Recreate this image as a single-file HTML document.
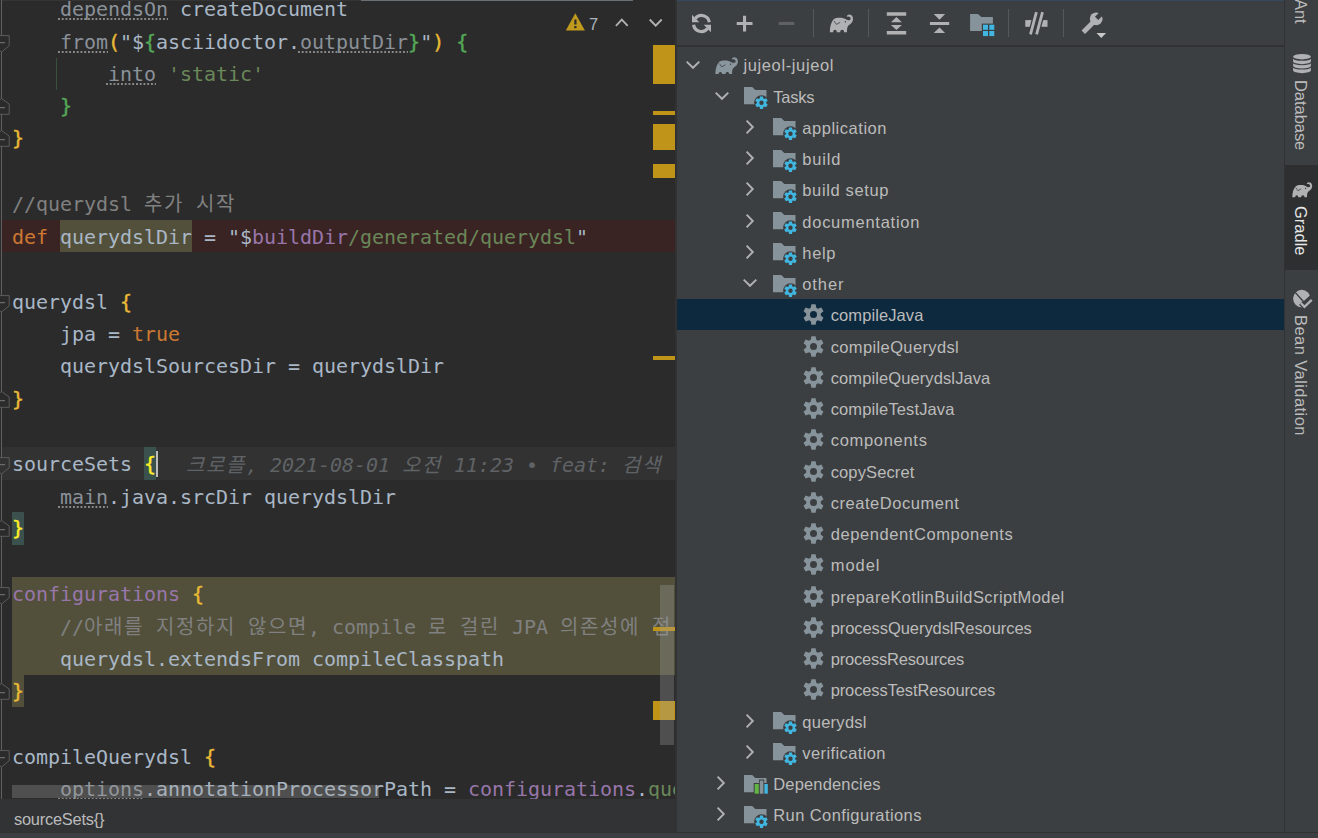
<!DOCTYPE html><html lang="ko"><head><meta charset="utf-8"><title>build.gradle</title><style>
html,body{margin:0;padding:0}
body{width:1318px;height:838px;overflow:hidden;position:relative;background:#3c3f41;font-family:"Liberation Sans",sans-serif}
.ab{position:absolute}
.ab svg{display:block}
#ed{position:absolute;left:0;top:0;width:675px;height:799px;overflow:hidden;background:#2b2b2b}
.ln{position:absolute;left:12px;height:32px;line-height:32px;white-space:pre;font-family:"DejaVu Sans Mono","Liberation Mono","Noto Sans CJK KR",monospace;font-size:20px;letter-spacing:-0.041px;color:#a9b7c6}
.ln .u{padding-left:2px;margin-left:-2px;background-image:linear-gradient(90deg,#8a8a8a 0,#8a8a8a 1.8px,transparent 1.8px);background-size:3.75px 2px;background-repeat:repeat-x;background-position:0 21px}
.ln .k{font-family:"Liberation Sans","Noto Sans CJK KR","NanumGothic",sans-serif;letter-spacing:1.594px}
.ln .b{-webkit-text-stroke:0.45px currentColor}
.tl{position:absolute;height:31.25px;line-height:31.25px;font-size:16.5px;color:#bbbbbb;white-space:pre}
.vt{position:absolute;white-space:pre;font-size:16.5px;color:#bbbbbb;transform-origin:0 0;transform:rotate(90deg);line-height:20px;height:20px}
</style></head><body>
<div id="ed">
<div class="ab" style="left:2px;top:220px;width:673px;height:32px;background:#3a2323"></div>
<div class="ab" style="left:60px;top:220px;width:132px;height:32px;background:#52503a"></div>
<div class="ab" style="left:2px;top:447px;width:673px;height:33px;background:#323232"></div>
<div class="ab" style="left:144px;top:447px;width:12px;height:33px;background:#3b514d"></div>
<div class="ab" style="left:12px;top:512px;width:12px;height:33px;background:#3b514d"></div>
<div class="ab" style="left:12px;top:577px;width:663px;height:98px;background:#52503a"></div>
<div class="ab" style="left:12px;top:675px;width:12px;height:32px;background:#52503a"></div>
<div class="ab" style="left:56px;top:58px;width:1px;height:32px;background:#39503a"></div>
<div class="ab" style="left:361px;top:0;width:272px;height:1px;background:#6a6f73"></div>
<div class="ab" style="left:2px;top:0;width:359px;height:1px;background:#353535"></div>
<div class="ln" style="top:-7.00px"><span style="color:#a9b7c6">    </span><span style="color:#8a9199" class="u">dependsOn</span><span style="color:#a9b7c6"> createDocument</span></div>
<div class="ln" style="top:26.00px"><span style="color:#a9b7c6">    </span><span style="color:#8a9199" class="u">from</span><span style="color:#e8ba36" class="b">(</span><span style="color:#a9b7c6">"$</span><span style="color:#54a857" class="b">{</span><span style="color:#a9b7c6">asciidoctor.</span><span style="color:#8a9199" class="u">outputDir</span><span style="color:#54a857" class="b">}</span><span style="color:#a9b7c6">"</span><span style="color:#e8ba36" class="b">)</span><span style="color:#a9b7c6"> </span><span style="color:#54a857" class="b">{</span></div>
<div class="ln" style="top:58.00px"><span style="color:#a9b7c6">        </span><span style="color:#8a9199" class="u">into</span><span style="color:#a9b7c6"> </span><span style="color:#6a8759">'static'</span></div>
<div class="ln" style="top:90.00px"><span style="color:#a9b7c6">    </span><span style="color:#54a857" class="b">}</span></div>
<div class="ln" style="top:122.00px"><span style="color:#e8ba36" class="b">}</span></div>
<div class="ln" style="top:188.00px"><span style="color:#808080">//querydsl </span><span style="color:#808080" class="k">추가</span><span style="color:#808080"> </span><span style="color:#808080" class="k">시작</span></div>
<div class="ln" style="top:221.00px"><span style="color:#cc7832">def</span><span style="color:#a9b7c6"> querydslDir = "$</span><span style="color:#9876aa">buildDir</span><span style="color:#6a8759">/generated/querydsl</span><span style="color:#a9b7c6">"</span></div>
<div class="ln" style="top:286.00px"><span style="color:#a9b7c6">querydsl </span><span style="color:#e8ba36" class="b">{</span></div>
<div class="ln" style="top:318.00px"><span style="color:#a9b7c6">    jpa = </span><span style="color:#cc7832">true</span></div>
<div class="ln" style="top:350.00px"><span style="color:#a9b7c6">    querydslSourcesDir = querydslDir</span></div>
<div class="ln" style="top:383.00px"><span style="color:#e8ba36" class="b">}</span></div>
<div class="ln" style="top:448.00px"><span style="color:#a9b7c6">sourceSets </span><span style="color:#ffef28" class="b">{</span></div>
<div class="ln" style="top:481.00px"><span style="color:#a9b7c6">    </span><span style="color:#8a9199" class="u">main</span><span style="color:#a9b7c6">.java.srcDir querydslDir</span></div>
<div class="ln" style="top:512.00px"><span style="color:#ffef28" class="b">}</span></div>
<div class="ln" style="top:578.00px"><span style="color:#9876aa">configurations</span><span style="color:#a9b7c6"> </span><span style="color:#e8ba36" class="b">{</span></div>
<div class="ln" style="top:611.00px"><span style="color:#808080">    //</span><span style="color:#808080" class="k">아래를</span><span style="color:#808080"> </span><span style="color:#808080" class="k">지정하지</span><span style="color:#808080"> </span><span style="color:#808080" class="k">않으면</span><span style="color:#808080">, compile </span><span style="color:#808080" class="k">로</span><span style="color:#808080"> </span><span style="color:#808080" class="k">걸린</span><span style="color:#808080"> JPA </span><span style="color:#808080" class="k">의존성에</span><span style="color:#808080"> </span><span style="color:#808080" class="k">접</span></div>
<div class="ln" style="top:643.00px"><span style="color:#a9b7c6">    querydsl.extendsFrom compileClasspath</span></div>
<div class="ln" style="top:675.00px"><span style="color:#e8ba36" class="b">}</span></div>
<div class="ln" style="top:741.00px"><span style="color:#a9b7c6">compileQuerydsl </span><span style="color:#e8ba36" class="b">{</span></div>
<div class="ln" style="top:773.00px"><span style="color:#a9b7c6">    </span><span style="color:#8a9199" class="u">options</span><span style="color:#a9b7c6">.annotationProcessorPath = </span><span style="color:#9876aa">configurations</span><span style="color:#a9b7c6">.</span><span style="color:#6a8759">querydsl</span></div>
<div class="ln" style="left:186px;top:449.00px;color:#606366;font-style:italic"><span class="k">크로플</span>, 2021-08-01 <span class="k">오전</span> 11:23 • feat: <span class="k">검색</span></div>
<div class="ab" style="left:155.5px;top:451px;width:2.5px;height:26px;background:#bbbbbb"></div>
<svg class="ab" style="left:0;top:0" width="14" height="800" viewBox="0 0 14 800"><rect x="1" y="0" width="1" height="800" fill="#606060"/><path d="M-6,35.6H9.2V45.7L1.5,52.1L-6,45.7Z" fill="#2b2b2b" stroke="#5c5c5c" stroke-width="1"/><rect x="-2" y="42.2" width="7" height="1" fill="#7a7a7a"/><path d="M-6,295.6H9.2V305.7L1.5,312.1L-6,305.7Z" fill="#2b2b2b" stroke="#5c5c5c" stroke-width="1"/><rect x="-2" y="302.2" width="7" height="1" fill="#7a7a7a"/><path d="M-6,457.6H9.2V467.7L1.5,474.1L-6,467.7Z" fill="#323232" stroke="#5c5c5c" stroke-width="1"/><rect x="-2" y="464.2" width="7" height="1" fill="#7a7a7a"/><path d="M-6,587.6H9.2V597.7L1.5,604.1L-6,597.7Z" fill="#2b2b2b" stroke="#5c5c5c" stroke-width="1"/><rect x="-2" y="594.2" width="7" height="1" fill="#7a7a7a"/><path d="M-6,750.6H9.2V760.7L1.5,767.1L-6,760.7Z" fill="#2b2b2b" stroke="#5c5c5c" stroke-width="1"/><rect x="-2" y="757.2" width="7" height="1" fill="#7a7a7a"/><path d="M-6,114.3H9.2V104.0L1.5,98.5L-6,104.0Z" fill="#2b2b2b" stroke="#5c5c5c" stroke-width="1"/><rect x="-2" y="107.2" width="7" height="1" fill="#7a7a7a"/><path d="M-6,146.3H9.2V136.0L1.5,130.5L-6,136.0Z" fill="#2b2b2b" stroke="#5c5c5c" stroke-width="1"/><rect x="-2" y="139.2" width="7" height="1" fill="#7a7a7a"/><path d="M-6,407.3H9.2V397.0L1.5,391.5L-6,397.0Z" fill="#2b2b2b" stroke="#5c5c5c" stroke-width="1"/><rect x="-2" y="400.2" width="7" height="1" fill="#7a7a7a"/><path d="M-6,536.3H9.2V526.0L1.5,520.5L-6,526.0Z" fill="#2b2b2b" stroke="#5c5c5c" stroke-width="1"/><rect x="-2" y="529.2" width="7" height="1" fill="#7a7a7a"/><path d="M-6,699.3H9.2V689.0L1.5,683.5L-6,689.0Z" fill="#2b2b2b" stroke="#5c5c5c" stroke-width="1"/><rect x="-2" y="692.2" width="7" height="1" fill="#7a7a7a"/></svg>
<div class="ab" style="left:653px;top:45.0px;width:22px;height:39.0px;background:#c09418"></div>
<div class="ab" style="left:653px;top:111.0px;width:22px;height:4.0px;background:#c09418"></div>
<div class="ab" style="left:653px;top:124.0px;width:22px;height:26.0px;background:#c09418"></div>
<div class="ab" style="left:653px;top:164.0px;width:22px;height:13.5px;background:#c09418"></div>
<div class="ab" style="left:653px;top:356.0px;width:22px;height:4.0px;background:#c09418"></div>
<div class="ab" style="left:653px;top:700.7px;width:22px;height:19.3px;background:#c09418"></div>
<div class="ab" style="left:653px;top:627px;width:22px;height:4px;background:#c09418"></div>
<div class="ab" style="left:660px;top:584.7px;width:14px;height:160.3px;background:rgba(162,162,162,0.31)"></div>
<div class="ab" style="left:12px;top:784.5px;width:367px;height:13.5px;background:rgba(162,162,162,0.31)"></div>
<svg class="ab" style="left:560px;top:8px" width="110" height="28" viewBox="560 8 110 28"><path d="M575.3,13.2L584.9,30.4H565.8Z" fill="#c09a1d"/><rect x="574.3" y="19.5" width="2.2" height="5" fill="#2b2b2b"/><rect x="574.3" y="26" width="2.2" height="2.2" fill="#2b2b2b"/><path d="M615.9,25.8L621.8,19.7L627.7,25.8" fill="none" stroke="#afb1b3" stroke-width="1.9"/><path d="M649.7,19.5L655.7,25.7L661.7,19.5" fill="none" stroke="#afb1b3" stroke-width="1.9"/></svg>
<div class="ab" style="left:589px;top:13px;font-size:16.5px;line-height:22px;color:#a7b3bd">7</div>
</div>
<div class="ab" style="left:0;top:799px;width:675px;height:33px;background:#313335"></div>
<div class="ab" id="bc" style="left:14px;top:807.6px;font-size:16.4px;line-height:22px;color:#bbbbbb;letter-spacing:-0.232px">sourceSets{}</div>
<div class="ab" style="left:675px;top:0;width:2px;height:832px;background:#323232"></div>
<div class="ab" style="left:677px;top:0;width:607px;height:832px;background:#3c3f41"></div>
<div class="ab" style="left:677px;top:0;width:607px;height:1px;background:#35485e"></div>
<div class="ab" style="left:677px;top:45px;width:607px;height:1.5px;background:#2f3133"></div>
<svg class="ab" style="left:677px;top:0" width="607" height="46" viewBox="677 0 607 46"><g fill="none" stroke="#afb1b3" stroke-width="3.2"><path d="M709.3,22.3A7.9,7.9 0 0 0 695.3,18.4"/><path d="M693.6,24.7A7.9,7.9 0 0 0 707.6,28.6"/></g><path d="M692,14.7V22.3H699.3Z M711,32.3V24.8H703.7Z" fill="#afb1b3"/><path d="M743,15.7h3.1v6.2h6.4v3.1h-6.4v6.4h-3.1v-6.4h-6.3v-3.1h6.3z" fill="#afb1b3"/><rect x="778.7" y="21.9" width="15.6" height="3.1" fill="#5f6162"/><rect x="813" y="9" width="1" height="28" fill="#555759"/><rect x="868" y="9" width="1" height="28" fill="#555759"/><rect x="1008" y="9" width="1" height="28" fill="#555759"/><rect x="1063" y="9" width="1" height="28" fill="#555759"/><g transform="translate(829.5,14.3)"><path d="M0.35,17.84C0.35,12.7 1.5,7.7 4.4,4.8C6.5,3.3 13.5,2.7 16.8,5.3C18,6 20,6.3 20.8,5.4C21.7,4.3 21.1,2.7 19,2.2L17.3,2.4C17.1,1.2 18.5,0.1 20,0.2C22.5,0.3 23.7,2.7 23.5,5.2C23.2,8.2 21,9.7 19.5,10.7C18.3,11.7 17.7,13.2 17.6,14.7L17.4,17.84L14.6,17.84C14.6,14.7 10.7,14.7 10.7,17.84L7.3,17.84C7.3,14.7 3.7,14.7 3.7,17.84Z" fill="#afb1b3"/><path d="M4.5,6.7L6.9,10.1L10.7,8" fill="none" stroke="#3c3f41" stroke-width="0.8"/><circle cx="15.9" cy="7.4" r="0.7" fill="#3c3f41"/></g><path d="M886.8,12.2h19.4v3.6h-19.4z M886.8,31h19.4v3.6h-19.4z M896.4,16.9L901.9,22.2H890.9Z M896.4,30.1L901.9,24.9H890.9Z" fill="#afb1b3"/><path d="M929.9,21.9h19.3v3.2h-19.3z M939.5,19.7L945.1,14H933.7Z M939.5,27.4L945.1,33.1H933.7Z" fill="#afb1b3"/><path d="M970.1,14H977.9L981.4,17.1H992.9V31H970.1Z" fill="#87939a"/><rect x="981.8" y="23.6" width="14" height="14" fill="#3c3f41"/><rect x="983.0" y="24.7" width="5" height="5.1" fill="#40b6e0"/><rect x="989.3" y="24.7" width="5" height="5.1" fill="#40b6e0"/><rect x="983.0" y="31.0" width="5" height="5.1" fill="#40b6e0"/><rect x="989.3" y="31.0" width="5" height="5.1" fill="#40b6e0"/><rect x="1025.3" y="20.1" width="22.2" height="6.7" fill="#afb1b3"/><g stroke-linecap="butt"><path d="M1030.5,34.2L1036.4,12.2M1036.6,34.2L1042.5,12.2M1033.5,34.2L1039.4,12.2" stroke="#3c3f41" stroke-width="5.4" fill="none"/><path d="M1030.5,34.4L1036.4,12.1M1036.6,34.4L1042.5,12.1" stroke="#afb1b3" stroke-width="2.8" fill="none"/></g><path d="M1083.3,32.3L1094.5,21" stroke="#afb1b3" stroke-width="4.8" fill="none"/><circle cx="1096.2" cy="18.8" r="6.4" fill="#afb1b3"/><path d="M1096.6,18.4L1102.5,12.5" stroke="#3c3f41" stroke-width="4.6" fill="none"/><path d="M1096.5,32.9H1106.1L1101.3,37.9Z" fill="#c8c8c8"/></svg>
<div class="ab" style="left:685.10px;top:59.72px"><svg width="16" height="10" viewBox="0 0 16 10"><path d="M1.7,1.6L8,7.8L14.3,1.6" fill="none" stroke="#afb1b3" stroke-width="1.9"/></svg></div>
<div class="ab" style="left:714.50px;top:56.83px"><svg width="23.4" height="17.6" viewBox="0 0 24 18"><path d="M0.35,17.84C0.35,12.7 1.5,7.7 4.4,4.8C6.5,3.3 13.5,2.7 16.8,5.3C18,6 20,6.3 20.8,5.4C21.7,4.3 21.1,2.7 19,2.2L17.3,2.4C17.1,1.2 18.5,0.1 20,0.2C22.5,0.3 23.7,2.7 23.5,5.2C23.2,8.2 21,9.7 19.5,10.7C18.3,11.7 17.7,13.2 17.6,14.7L17.4,17.84L14.6,17.84C14.6,14.7 10.7,14.7 10.7,17.84L7.3,17.84C7.3,14.7 3.7,14.7 3.7,17.84Z" fill="#8a969e"/><path d="M4.5,6.7L6.9,10.1L10.7,8" fill="none" stroke="#3c3f41" stroke-width="0.8"/><circle cx="15.9" cy="7.4" r="0.7" fill="#3c3f41"/></svg></div>
<div class="tl" id="t0" style="left:743.40px;top:50.30px;letter-spacing:0.628px">jujeol-jujeol</div>
<div class="ab" style="left:713.70px;top:90.97px"><svg width="16" height="10" viewBox="0 0 16 10"><path d="M1.7,1.6L8,7.8L14.3,1.6" fill="none" stroke="#afb1b3" stroke-width="1.9"/></svg></div>
<div class="ab" style="left:743.55px;top:87.08px"><svg width="25" height="23" viewBox="0 0 25 23"><path d="M0,0H8.2L11.3,2.9H22.5V17.2H0Z" fill="#87939a"/><circle cx="17.5" cy="15.7" r="7.4" fill="#3c3f41"/><g transform="translate(11,9.2)"><path d="M4.60,2.42L5.00,0.20L8.00,0.20L8.40,2.42A4.50,4.50 0 0 1 9.08,2.81L11.21,2.05L12.71,4.65L10.98,6.11A4.50,4.50 0 0 1 10.98,6.89L12.71,8.35L11.21,10.95L9.08,10.19A4.50,4.50 0 0 1 8.40,10.58L8.00,12.80L5.00,12.80L4.60,10.58A4.50,4.50 0 0 1 3.92,10.19L1.79,10.95L0.29,8.35L2.02,6.89A4.50,4.50 0 0 1 2.02,6.11L0.29,4.65L1.79,2.05L3.92,2.81A4.50,4.50 0 0 1 4.60,2.42ZM8.70,6.50A2.20,2.20 0 1 0 4.30,6.50A2.20,2.20 0 1 0 8.70,6.50Z" fill="#40b6e0" fill-rule="evenodd"/></g></svg></div>
<div class="tl" id="t1" style="left:773.30px;top:81.55px;letter-spacing:-0.222px">Tasks</div>
<div class="ab" style="left:744.60px;top:118.83px"><svg width="10" height="16" viewBox="0 0 10 16"><path d="M1.6,1.7L7.8,8L1.6,14.3" fill="none" stroke="#afb1b3" stroke-width="1.9"/></svg></div>
<div class="ab" style="left:772.80px;top:118.33px"><svg width="25" height="23" viewBox="0 0 25 23"><path d="M0,0H8.2L11.3,2.9H22.5V17.2H0Z" fill="#87939a"/><circle cx="17.5" cy="15.7" r="7.4" fill="#3c3f41"/><g transform="translate(11,9.2)"><path d="M4.60,2.42L5.00,0.20L8.00,0.20L8.40,2.42A4.50,4.50 0 0 1 9.08,2.81L11.21,2.05L12.71,4.65L10.98,6.11A4.50,4.50 0 0 1 10.98,6.89L12.71,8.35L11.21,10.95L9.08,10.19A4.50,4.50 0 0 1 8.40,10.58L8.00,12.80L5.00,12.80L4.60,10.58A4.50,4.50 0 0 1 3.92,10.19L1.79,10.95L0.29,8.35L2.02,6.89A4.50,4.50 0 0 1 2.02,6.11L0.29,4.65L1.79,2.05L3.92,2.81A4.50,4.50 0 0 1 4.60,2.42ZM8.70,6.50A2.20,2.20 0 1 0 4.30,6.50A2.20,2.20 0 1 0 8.70,6.50Z" fill="#40b6e0" fill-rule="evenodd"/></g></svg></div>
<div class="tl" id="t2" style="left:802.30px;top:112.80px;letter-spacing:0.531px">application</div>
<div class="ab" style="left:744.60px;top:150.07px"><svg width="10" height="16" viewBox="0 0 10 16"><path d="M1.6,1.7L7.8,8L1.6,14.3" fill="none" stroke="#afb1b3" stroke-width="1.9"/></svg></div>
<div class="ab" style="left:772.80px;top:149.57px"><svg width="25" height="23" viewBox="0 0 25 23"><path d="M0,0H8.2L11.3,2.9H22.5V17.2H0Z" fill="#87939a"/><circle cx="17.5" cy="15.7" r="7.4" fill="#3c3f41"/><g transform="translate(11,9.2)"><path d="M4.60,2.42L5.00,0.20L8.00,0.20L8.40,2.42A4.50,4.50 0 0 1 9.08,2.81L11.21,2.05L12.71,4.65L10.98,6.11A4.50,4.50 0 0 1 10.98,6.89L12.71,8.35L11.21,10.95L9.08,10.19A4.50,4.50 0 0 1 8.40,10.58L8.00,12.80L5.00,12.80L4.60,10.58A4.50,4.50 0 0 1 3.92,10.19L1.79,10.95L0.29,8.35L2.02,6.89A4.50,4.50 0 0 1 2.02,6.11L0.29,4.65L1.79,2.05L3.92,2.81A4.50,4.50 0 0 1 4.60,2.42ZM8.70,6.50A2.20,2.20 0 1 0 4.30,6.50A2.20,2.20 0 1 0 8.70,6.50Z" fill="#40b6e0" fill-rule="evenodd"/></g></svg></div>
<div class="tl" id="t3" style="left:802.30px;top:144.05px;letter-spacing:0.831px">build</div>
<div class="ab" style="left:744.60px;top:181.32px"><svg width="10" height="16" viewBox="0 0 10 16"><path d="M1.6,1.7L7.8,8L1.6,14.3" fill="none" stroke="#afb1b3" stroke-width="1.9"/></svg></div>
<div class="ab" style="left:772.80px;top:180.82px"><svg width="25" height="23" viewBox="0 0 25 23"><path d="M0,0H8.2L11.3,2.9H22.5V17.2H0Z" fill="#87939a"/><circle cx="17.5" cy="15.7" r="7.4" fill="#3c3f41"/><g transform="translate(11,9.2)"><path d="M4.60,2.42L5.00,0.20L8.00,0.20L8.40,2.42A4.50,4.50 0 0 1 9.08,2.81L11.21,2.05L12.71,4.65L10.98,6.11A4.50,4.50 0 0 1 10.98,6.89L12.71,8.35L11.21,10.95L9.08,10.19A4.50,4.50 0 0 1 8.40,10.58L8.00,12.80L5.00,12.80L4.60,10.58A4.50,4.50 0 0 1 3.92,10.19L1.79,10.95L0.29,8.35L2.02,6.89A4.50,4.50 0 0 1 2.02,6.11L0.29,4.65L1.79,2.05L3.92,2.81A4.50,4.50 0 0 1 4.60,2.42ZM8.70,6.50A2.20,2.20 0 1 0 4.30,6.50A2.20,2.20 0 1 0 8.70,6.50Z" fill="#40b6e0" fill-rule="evenodd"/></g></svg></div>
<div class="tl" id="t4" style="left:802.30px;top:175.30px;letter-spacing:0.639px">build setup</div>
<div class="ab" style="left:744.60px;top:212.57px"><svg width="10" height="16" viewBox="0 0 10 16"><path d="M1.6,1.7L7.8,8L1.6,14.3" fill="none" stroke="#afb1b3" stroke-width="1.9"/></svg></div>
<div class="ab" style="left:772.80px;top:212.07px"><svg width="25" height="23" viewBox="0 0 25 23"><path d="M0,0H8.2L11.3,2.9H22.5V17.2H0Z" fill="#87939a"/><circle cx="17.5" cy="15.7" r="7.4" fill="#3c3f41"/><g transform="translate(11,9.2)"><path d="M4.60,2.42L5.00,0.20L8.00,0.20L8.40,2.42A4.50,4.50 0 0 1 9.08,2.81L11.21,2.05L12.71,4.65L10.98,6.11A4.50,4.50 0 0 1 10.98,6.89L12.71,8.35L11.21,10.95L9.08,10.19A4.50,4.50 0 0 1 8.40,10.58L8.00,12.80L5.00,12.80L4.60,10.58A4.50,4.50 0 0 1 3.92,10.19L1.79,10.95L0.29,8.35L2.02,6.89A4.50,4.50 0 0 1 2.02,6.11L0.29,4.65L1.79,2.05L3.92,2.81A4.50,4.50 0 0 1 4.60,2.42ZM8.70,6.50A2.20,2.20 0 1 0 4.30,6.50A2.20,2.20 0 1 0 8.70,6.50Z" fill="#40b6e0" fill-rule="evenodd"/></g></svg></div>
<div class="tl" id="t5" style="left:802.30px;top:206.55px;letter-spacing:0.738px">documentation</div>
<div class="ab" style="left:744.60px;top:243.82px"><svg width="10" height="16" viewBox="0 0 10 16"><path d="M1.6,1.7L7.8,8L1.6,14.3" fill="none" stroke="#afb1b3" stroke-width="1.9"/></svg></div>
<div class="ab" style="left:772.80px;top:243.32px"><svg width="25" height="23" viewBox="0 0 25 23"><path d="M0,0H8.2L11.3,2.9H22.5V17.2H0Z" fill="#87939a"/><circle cx="17.5" cy="15.7" r="7.4" fill="#3c3f41"/><g transform="translate(11,9.2)"><path d="M4.60,2.42L5.00,0.20L8.00,0.20L8.40,2.42A4.50,4.50 0 0 1 9.08,2.81L11.21,2.05L12.71,4.65L10.98,6.11A4.50,4.50 0 0 1 10.98,6.89L12.71,8.35L11.21,10.95L9.08,10.19A4.50,4.50 0 0 1 8.40,10.58L8.00,12.80L5.00,12.80L4.60,10.58A4.50,4.50 0 0 1 3.92,10.19L1.79,10.95L0.29,8.35L2.02,6.89A4.50,4.50 0 0 1 2.02,6.11L0.29,4.65L1.79,2.05L3.92,2.81A4.50,4.50 0 0 1 4.60,2.42ZM8.70,6.50A2.20,2.20 0 1 0 4.30,6.50A2.20,2.20 0 1 0 8.70,6.50Z" fill="#40b6e0" fill-rule="evenodd"/></g></svg></div>
<div class="tl" id="t6" style="left:802.30px;top:237.80px;letter-spacing:0.666px">help</div>
<div class="ab" style="left:742.30px;top:278.48px"><svg width="16" height="10" viewBox="0 0 16 10"><path d="M1.7,1.6L8,7.8L14.3,1.6" fill="none" stroke="#afb1b3" stroke-width="1.9"/></svg></div>
<div class="ab" style="left:772.80px;top:274.57px"><svg width="25" height="23" viewBox="0 0 25 23"><path d="M0,0H8.2L11.3,2.9H22.5V17.2H0Z" fill="#87939a"/><circle cx="17.5" cy="15.7" r="7.4" fill="#3c3f41"/><g transform="translate(11,9.2)"><path d="M4.60,2.42L5.00,0.20L8.00,0.20L8.40,2.42A4.50,4.50 0 0 1 9.08,2.81L11.21,2.05L12.71,4.65L10.98,6.11A4.50,4.50 0 0 1 10.98,6.89L12.71,8.35L11.21,10.95L9.08,10.19A4.50,4.50 0 0 1 8.40,10.58L8.00,12.80L5.00,12.80L4.60,10.58A4.50,4.50 0 0 1 3.92,10.19L1.79,10.95L0.29,8.35L2.02,6.89A4.50,4.50 0 0 1 2.02,6.11L0.29,4.65L1.79,2.05L3.92,2.81A4.50,4.50 0 0 1 4.60,2.42ZM8.70,6.50A2.20,2.20 0 1 0 4.30,6.50A2.20,2.20 0 1 0 8.70,6.50Z" fill="#40b6e0" fill-rule="evenodd"/></g></svg></div>
<div class="tl" id="t7" style="left:802.30px;top:269.05px;letter-spacing:0.898px">other</div>
<div style="position:absolute;left:677px;top:299.00px;width:607px;height:31.00px;background:#0d293e"></div>
<div class="ab" style="left:803.20px;top:304.43px"><svg width="21" height="21" viewBox="0 0 21 21"><path d="M7.70,3.76L8.40,0.20L12.60,0.20L13.30,3.76A7.30,7.30 0 0 1 14.94,4.70L18.37,3.53L20.47,7.17L17.74,9.55A7.30,7.30 0 0 1 17.74,11.45L20.47,13.83L18.37,17.47L14.94,16.30A7.30,7.30 0 0 1 13.30,17.24L12.60,20.80L8.40,20.80L7.70,17.24A7.30,7.30 0 0 1 6.06,16.30L2.63,17.47L0.53,13.83L3.26,11.45A7.30,7.30 0 0 1 3.26,9.55L0.53,7.17L2.63,3.53L6.06,4.70A7.30,7.30 0 0 1 7.70,3.76ZM14.00,10.50A3.50,3.50 0 1 0 7.00,10.50A3.50,3.50 0 1 0 14.00,10.50Z" fill="#87939a" fill-rule="evenodd"/></svg></div>
<div class="tl" id="t8" style="left:830.70px;top:300.30px;letter-spacing:0.098px">compileJava</div>
<div class="ab" style="left:803.20px;top:335.68px"><svg width="21" height="21" viewBox="0 0 21 21"><path d="M7.70,3.76L8.40,0.20L12.60,0.20L13.30,3.76A7.30,7.30 0 0 1 14.94,4.70L18.37,3.53L20.47,7.17L17.74,9.55A7.30,7.30 0 0 1 17.74,11.45L20.47,13.83L18.37,17.47L14.94,16.30A7.30,7.30 0 0 1 13.30,17.24L12.60,20.80L8.40,20.80L7.70,17.24A7.30,7.30 0 0 1 6.06,16.30L2.63,17.47L0.53,13.83L3.26,11.45A7.30,7.30 0 0 1 3.26,9.55L0.53,7.17L2.63,3.53L6.06,4.70A7.30,7.30 0 0 1 7.70,3.76ZM14.00,10.50A3.50,3.50 0 1 0 7.00,10.50A3.50,3.50 0 1 0 14.00,10.50Z" fill="#87939a" fill-rule="evenodd"/></svg></div>
<div class="tl" id="t9" style="left:830.70px;top:331.55px;letter-spacing:0.372px">compileQuerydsl</div>
<div class="ab" style="left:803.20px;top:366.93px"><svg width="21" height="21" viewBox="0 0 21 21"><path d="M7.70,3.76L8.40,0.20L12.60,0.20L13.30,3.76A7.30,7.30 0 0 1 14.94,4.70L18.37,3.53L20.47,7.17L17.74,9.55A7.30,7.30 0 0 1 17.74,11.45L20.47,13.83L18.37,17.47L14.94,16.30A7.30,7.30 0 0 1 13.30,17.24L12.60,20.80L8.40,20.80L7.70,17.24A7.30,7.30 0 0 1 6.06,16.30L2.63,17.47L0.53,13.83L3.26,11.45A7.30,7.30 0 0 1 3.26,9.55L0.53,7.17L2.63,3.53L6.06,4.70A7.30,7.30 0 0 1 7.70,3.76ZM14.00,10.50A3.50,3.50 0 1 0 7.00,10.50A3.50,3.50 0 1 0 14.00,10.50Z" fill="#87939a" fill-rule="evenodd"/></svg></div>
<div class="tl" id="t10" style="left:830.70px;top:362.80px;letter-spacing:0.104px">compileQuerydslJava</div>
<div class="ab" style="left:803.20px;top:398.18px"><svg width="21" height="21" viewBox="0 0 21 21"><path d="M7.70,3.76L8.40,0.20L12.60,0.20L13.30,3.76A7.30,7.30 0 0 1 14.94,4.70L18.37,3.53L20.47,7.17L17.74,9.55A7.30,7.30 0 0 1 17.74,11.45L20.47,13.83L18.37,17.47L14.94,16.30A7.30,7.30 0 0 1 13.30,17.24L12.60,20.80L8.40,20.80L7.70,17.24A7.30,7.30 0 0 1 6.06,16.30L2.63,17.47L0.53,13.83L3.26,11.45A7.30,7.30 0 0 1 3.26,9.55L0.53,7.17L2.63,3.53L6.06,4.70A7.30,7.30 0 0 1 7.70,3.76ZM14.00,10.50A3.50,3.50 0 1 0 7.00,10.50A3.50,3.50 0 1 0 14.00,10.50Z" fill="#87939a" fill-rule="evenodd"/></svg></div>
<div class="tl" id="t11" style="left:830.70px;top:394.05px;letter-spacing:0.123px">compileTestJava</div>
<div class="ab" style="left:803.20px;top:429.43px"><svg width="21" height="21" viewBox="0 0 21 21"><path d="M7.70,3.76L8.40,0.20L12.60,0.20L13.30,3.76A7.30,7.30 0 0 1 14.94,4.70L18.37,3.53L20.47,7.17L17.74,9.55A7.30,7.30 0 0 1 17.74,11.45L20.47,13.83L18.37,17.47L14.94,16.30A7.30,7.30 0 0 1 13.30,17.24L12.60,20.80L8.40,20.80L7.70,17.24A7.30,7.30 0 0 1 6.06,16.30L2.63,17.47L0.53,13.83L3.26,11.45A7.30,7.30 0 0 1 3.26,9.55L0.53,7.17L2.63,3.53L6.06,4.70A7.30,7.30 0 0 1 7.70,3.76ZM14.00,10.50A3.50,3.50 0 1 0 7.00,10.50A3.50,3.50 0 1 0 14.00,10.50Z" fill="#87939a" fill-rule="evenodd"/></svg></div>
<div class="tl" id="t12" style="left:830.70px;top:425.30px;letter-spacing:0.701px">components</div>
<div class="ab" style="left:803.20px;top:460.68px"><svg width="21" height="21" viewBox="0 0 21 21"><path d="M7.70,3.76L8.40,0.20L12.60,0.20L13.30,3.76A7.30,7.30 0 0 1 14.94,4.70L18.37,3.53L20.47,7.17L17.74,9.55A7.30,7.30 0 0 1 17.74,11.45L20.47,13.83L18.37,17.47L14.94,16.30A7.30,7.30 0 0 1 13.30,17.24L12.60,20.80L8.40,20.80L7.70,17.24A7.30,7.30 0 0 1 6.06,16.30L2.63,17.47L0.53,13.83L3.26,11.45A7.30,7.30 0 0 1 3.26,9.55L0.53,7.17L2.63,3.53L6.06,4.70A7.30,7.30 0 0 1 7.70,3.76ZM14.00,10.50A3.50,3.50 0 1 0 7.00,10.50A3.50,3.50 0 1 0 14.00,10.50Z" fill="#87939a" fill-rule="evenodd"/></svg></div>
<div class="tl" id="t13" style="left:830.70px;top:456.55px;letter-spacing:0.128px">copySecret</div>
<div class="ab" style="left:803.20px;top:491.93px"><svg width="21" height="21" viewBox="0 0 21 21"><path d="M7.70,3.76L8.40,0.20L12.60,0.20L13.30,3.76A7.30,7.30 0 0 1 14.94,4.70L18.37,3.53L20.47,7.17L17.74,9.55A7.30,7.30 0 0 1 17.74,11.45L20.47,13.83L18.37,17.47L14.94,16.30A7.30,7.30 0 0 1 13.30,17.24L12.60,20.80L8.40,20.80L7.70,17.24A7.30,7.30 0 0 1 6.06,16.30L2.63,17.47L0.53,13.83L3.26,11.45A7.30,7.30 0 0 1 3.26,9.55L0.53,7.17L2.63,3.53L6.06,4.70A7.30,7.30 0 0 1 7.70,3.76ZM14.00,10.50A3.50,3.50 0 1 0 7.00,10.50A3.50,3.50 0 1 0 14.00,10.50Z" fill="#87939a" fill-rule="evenodd"/></svg></div>
<div class="tl" id="t14" style="left:830.70px;top:487.80px;letter-spacing:0.541px">createDocument</div>
<div class="ab" style="left:803.20px;top:523.17px"><svg width="21" height="21" viewBox="0 0 21 21"><path d="M7.70,3.76L8.40,0.20L12.60,0.20L13.30,3.76A7.30,7.30 0 0 1 14.94,4.70L18.37,3.53L20.47,7.17L17.74,9.55A7.30,7.30 0 0 1 17.74,11.45L20.47,13.83L18.37,17.47L14.94,16.30A7.30,7.30 0 0 1 13.30,17.24L12.60,20.80L8.40,20.80L7.70,17.24A7.30,7.30 0 0 1 6.06,16.30L2.63,17.47L0.53,13.83L3.26,11.45A7.30,7.30 0 0 1 3.26,9.55L0.53,7.17L2.63,3.53L6.06,4.70A7.30,7.30 0 0 1 7.70,3.76ZM14.00,10.50A3.50,3.50 0 1 0 7.00,10.50A3.50,3.50 0 1 0 14.00,10.50Z" fill="#87939a" fill-rule="evenodd"/></svg></div>
<div class="tl" id="t15" style="left:830.70px;top:519.05px;letter-spacing:0.585px">dependentComponents</div>
<div class="ab" style="left:803.20px;top:554.42px"><svg width="21" height="21" viewBox="0 0 21 21"><path d="M7.70,3.76L8.40,0.20L12.60,0.20L13.30,3.76A7.30,7.30 0 0 1 14.94,4.70L18.37,3.53L20.47,7.17L17.74,9.55A7.30,7.30 0 0 1 17.74,11.45L20.47,13.83L18.37,17.47L14.94,16.30A7.30,7.30 0 0 1 13.30,17.24L12.60,20.80L8.40,20.80L7.70,17.24A7.30,7.30 0 0 1 6.06,16.30L2.63,17.47L0.53,13.83L3.26,11.45A7.30,7.30 0 0 1 3.26,9.55L0.53,7.17L2.63,3.53L6.06,4.70A7.30,7.30 0 0 1 7.70,3.76ZM14.00,10.50A3.50,3.50 0 1 0 7.00,10.50A3.50,3.50 0 1 0 14.00,10.50Z" fill="#87939a" fill-rule="evenodd"/></svg></div>
<div class="tl" id="t16" style="left:830.70px;top:550.30px;letter-spacing:0.962px">model</div>
<div class="ab" style="left:803.20px;top:585.67px"><svg width="21" height="21" viewBox="0 0 21 21"><path d="M7.70,3.76L8.40,0.20L12.60,0.20L13.30,3.76A7.30,7.30 0 0 1 14.94,4.70L18.37,3.53L20.47,7.17L17.74,9.55A7.30,7.30 0 0 1 17.74,11.45L20.47,13.83L18.37,17.47L14.94,16.30A7.30,7.30 0 0 1 13.30,17.24L12.60,20.80L8.40,20.80L7.70,17.24A7.30,7.30 0 0 1 6.06,16.30L2.63,17.47L0.53,13.83L3.26,11.45A7.30,7.30 0 0 1 3.26,9.55L0.53,7.17L2.63,3.53L6.06,4.70A7.30,7.30 0 0 1 7.70,3.76ZM14.00,10.50A3.50,3.50 0 1 0 7.00,10.50A3.50,3.50 0 1 0 14.00,10.50Z" fill="#87939a" fill-rule="evenodd"/></svg></div>
<div class="tl" id="t17" style="left:830.70px;top:581.55px;letter-spacing:0.412px">prepareKotlinBuildScriptModel</div>
<div class="ab" style="left:803.20px;top:616.92px"><svg width="21" height="21" viewBox="0 0 21 21"><path d="M7.70,3.76L8.40,0.20L12.60,0.20L13.30,3.76A7.30,7.30 0 0 1 14.94,4.70L18.37,3.53L20.47,7.17L17.74,9.55A7.30,7.30 0 0 1 17.74,11.45L20.47,13.83L18.37,17.47L14.94,16.30A7.30,7.30 0 0 1 13.30,17.24L12.60,20.80L8.40,20.80L7.70,17.24A7.30,7.30 0 0 1 6.06,16.30L2.63,17.47L0.53,13.83L3.26,11.45A7.30,7.30 0 0 1 3.26,9.55L0.53,7.17L2.63,3.53L6.06,4.70A7.30,7.30 0 0 1 7.70,3.76ZM14.00,10.50A3.50,3.50 0 1 0 7.00,10.50A3.50,3.50 0 1 0 14.00,10.50Z" fill="#87939a" fill-rule="evenodd"/></svg></div>
<div class="tl" id="t18" style="left:830.70px;top:612.80px;letter-spacing:-0.068px">processQuerydslResources</div>
<div class="ab" style="left:803.20px;top:648.17px"><svg width="21" height="21" viewBox="0 0 21 21"><path d="M7.70,3.76L8.40,0.20L12.60,0.20L13.30,3.76A7.30,7.30 0 0 1 14.94,4.70L18.37,3.53L20.47,7.17L17.74,9.55A7.30,7.30 0 0 1 17.74,11.45L20.47,13.83L18.37,17.47L14.94,16.30A7.30,7.30 0 0 1 13.30,17.24L12.60,20.80L8.40,20.80L7.70,17.24A7.30,7.30 0 0 1 6.06,16.30L2.63,17.47L0.53,13.83L3.26,11.45A7.30,7.30 0 0 1 3.26,9.55L0.53,7.17L2.63,3.53L6.06,4.70A7.30,7.30 0 0 1 7.70,3.76ZM14.00,10.50A3.50,3.50 0 1 0 7.00,10.50A3.50,3.50 0 1 0 14.00,10.50Z" fill="#87939a" fill-rule="evenodd"/></svg></div>
<div class="tl" id="t19" style="left:830.70px;top:644.05px;letter-spacing:-0.203px">processResources</div>
<div class="ab" style="left:803.20px;top:679.42px"><svg width="21" height="21" viewBox="0 0 21 21"><path d="M7.70,3.76L8.40,0.20L12.60,0.20L13.30,3.76A7.30,7.30 0 0 1 14.94,4.70L18.37,3.53L20.47,7.17L17.74,9.55A7.30,7.30 0 0 1 17.74,11.45L20.47,13.83L18.37,17.47L14.94,16.30A7.30,7.30 0 0 1 13.30,17.24L12.60,20.80L8.40,20.80L7.70,17.24A7.30,7.30 0 0 1 6.06,16.30L2.63,17.47L0.53,13.83L3.26,11.45A7.30,7.30 0 0 1 3.26,9.55L0.53,7.17L2.63,3.53L6.06,4.70A7.30,7.30 0 0 1 7.70,3.76ZM14.00,10.50A3.50,3.50 0 1 0 7.00,10.50A3.50,3.50 0 1 0 14.00,10.50Z" fill="#87939a" fill-rule="evenodd"/></svg></div>
<div class="tl" id="t20" style="left:830.70px;top:675.30px;letter-spacing:-0.121px">processTestResources</div>
<div class="ab" style="left:744.60px;top:712.58px"><svg width="10" height="16" viewBox="0 0 10 16"><path d="M1.6,1.7L7.8,8L1.6,14.3" fill="none" stroke="#afb1b3" stroke-width="1.9"/></svg></div>
<div class="ab" style="left:772.80px;top:712.08px"><svg width="25" height="23" viewBox="0 0 25 23"><path d="M0,0H8.2L11.3,2.9H22.5V17.2H0Z" fill="#87939a"/><circle cx="17.5" cy="15.7" r="7.4" fill="#3c3f41"/><g transform="translate(11,9.2)"><path d="M4.60,2.42L5.00,0.20L8.00,0.20L8.40,2.42A4.50,4.50 0 0 1 9.08,2.81L11.21,2.05L12.71,4.65L10.98,6.11A4.50,4.50 0 0 1 10.98,6.89L12.71,8.35L11.21,10.95L9.08,10.19A4.50,4.50 0 0 1 8.40,10.58L8.00,12.80L5.00,12.80L4.60,10.58A4.50,4.50 0 0 1 3.92,10.19L1.79,10.95L0.29,8.35L2.02,6.89A4.50,4.50 0 0 1 2.02,6.11L0.29,4.65L1.79,2.05L3.92,2.81A4.50,4.50 0 0 1 4.60,2.42ZM8.70,6.50A2.20,2.20 0 1 0 4.30,6.50A2.20,2.20 0 1 0 8.70,6.50Z" fill="#40b6e0" fill-rule="evenodd"/></g></svg></div>
<div class="tl" id="t21" style="left:802.30px;top:706.55px;letter-spacing:0.261px">querydsl</div>
<div class="ab" style="left:744.60px;top:743.83px"><svg width="10" height="16" viewBox="0 0 10 16"><path d="M1.6,1.7L7.8,8L1.6,14.3" fill="none" stroke="#afb1b3" stroke-width="1.9"/></svg></div>
<div class="ab" style="left:772.80px;top:743.33px"><svg width="25" height="23" viewBox="0 0 25 23"><path d="M0,0H8.2L11.3,2.9H22.5V17.2H0Z" fill="#87939a"/><circle cx="17.5" cy="15.7" r="7.4" fill="#3c3f41"/><g transform="translate(11,9.2)"><path d="M4.60,2.42L5.00,0.20L8.00,0.20L8.40,2.42A4.50,4.50 0 0 1 9.08,2.81L11.21,2.05L12.71,4.65L10.98,6.11A4.50,4.50 0 0 1 10.98,6.89L12.71,8.35L11.21,10.95L9.08,10.19A4.50,4.50 0 0 1 8.40,10.58L8.00,12.80L5.00,12.80L4.60,10.58A4.50,4.50 0 0 1 3.92,10.19L1.79,10.95L0.29,8.35L2.02,6.89A4.50,4.50 0 0 1 2.02,6.11L0.29,4.65L1.79,2.05L3.92,2.81A4.50,4.50 0 0 1 4.60,2.42ZM8.70,6.50A2.20,2.20 0 1 0 4.30,6.50A2.20,2.20 0 1 0 8.70,6.50Z" fill="#40b6e0" fill-rule="evenodd"/></g></svg></div>
<div class="tl" id="t22" style="left:802.30px;top:737.80px;letter-spacing:0.393px">verification</div>
<div class="ab" style="left:716.00px;top:775.08px"><svg width="10" height="16" viewBox="0 0 10 16"><path d="M1.6,1.7L7.8,8L1.6,14.3" fill="none" stroke="#afb1b3" stroke-width="1.9"/></svg></div>
<div class="ab" style="left:743.55px;top:774.58px"><svg width="25" height="23" viewBox="0 0 25 23"><path d="M0,0H8.2L11.3,2.9H22.5V17.2H0Z" fill="#87939a"/><path d="M9.7,8H15V4.6H20.2V8H24.8V19.7H9.7Z" fill="#3c3f41"/><rect x="10.7" y="9" width="4.1" height="9.7" fill="#62b543"/><rect x="15.8" y="5.6" width="3.6" height="13.1" fill="#87939a"/><rect x="20.4" y="9" width="3.4" height="9.7" fill="#40b6e0"/></svg></div>
<div class="tl" id="t23" style="left:773.30px;top:769.05px;letter-spacing:0.155px">Dependencies</div>
<div class="ab" style="left:716.00px;top:806.33px"><svg width="10" height="16" viewBox="0 0 10 16"><path d="M1.6,1.7L7.8,8L1.6,14.3" fill="none" stroke="#afb1b3" stroke-width="1.9"/></svg></div>
<div class="ab" style="left:743.55px;top:805.83px"><svg width="25" height="23" viewBox="0 0 25 23"><path d="M0,0H8.2L11.3,2.9H22.5V17.2H0Z" fill="#87939a"/><circle cx="17.5" cy="15.7" r="7.4" fill="#3c3f41"/><g transform="translate(11,9.2)"><path d="M4.60,2.42L5.00,0.20L8.00,0.20L8.40,2.42A4.50,4.50 0 0 1 9.08,2.81L11.21,2.05L12.71,4.65L10.98,6.11A4.50,4.50 0 0 1 10.98,6.89L12.71,8.35L11.21,10.95L9.08,10.19A4.50,4.50 0 0 1 8.40,10.58L8.00,12.80L5.00,12.80L4.60,10.58A4.50,4.50 0 0 1 3.92,10.19L1.79,10.95L0.29,8.35L2.02,6.89A4.50,4.50 0 0 1 2.02,6.11L0.29,4.65L1.79,2.05L3.92,2.81A4.50,4.50 0 0 1 4.60,2.42ZM8.70,6.50A2.20,2.20 0 1 0 4.30,6.50A2.20,2.20 0 1 0 8.70,6.50Z" fill="#40b6e0" fill-rule="evenodd"/></g></svg></div>
<div class="tl" id="t24" style="left:773.30px;top:800.30px;letter-spacing:0.403px">Run Configurations</div>
<div class="ab" style="left:1284px;top:0;width:1px;height:832px;background:#2f3133"></div>
<div class="ab" style="left:1285px;top:165px;width:33px;height:105px;background:#2d2f30"></div>
<div class="vt" id="v0" style="left:1310.8px;top:-1.5px;letter-spacing:-0.049px">Ant</div>
<div class="vt" id="v1" style="left:1310.8px;top:80px;letter-spacing:-0.049px">Database</div>
<div class="vt" id="v2" style="left:1310.8px;top:206px;color:#e6e6e6;letter-spacing:-0.006px">Gradle</div>
<div class="vt" id="v3" style="left:1310.8px;top:315px;letter-spacing:0.438px">Bean Validation</div>
<svg class="ab" style="left:1292px;top:53px" width="20" height="22" viewBox="0 0 20 22"><g fill="#afb1b3"><ellipse cx="10" cy="3.65" rx="8.9" ry="2.75"/><path d="M1.1,5.50A8.9,2.3 0 0 0 18.9,5.50V8.40A8.9,2.75 0 0 1 1.1,8.40Z"/><path d="M1.1,9.90A8.9,2.3 0 0 0 18.9,9.90V12.75A8.9,2.75 0 0 1 1.1,12.75Z"/><path d="M1.1,14.25A8.9,2.3 0 0 0 18.9,14.25V17.40A8.9,2.75 0 0 1 1.1,17.40Z"/></g></svg>
<div class="ab" style="left:1292px;top:182px"><svg width="20.6" height="15.5" viewBox="0 0 24 18"><path d="M0.35,17.84C0.35,12.7 1.5,7.7 4.4,4.8C6.5,3.3 13.5,2.7 16.8,5.3C18,6 20,6.3 20.8,5.4C21.7,4.3 21.1,2.7 19,2.2L17.3,2.4C17.1,1.2 18.5,0.1 20,0.2C22.5,0.3 23.7,2.7 23.5,5.2C23.2,8.2 21,9.7 19.5,10.7C18.3,11.7 17.7,13.2 17.6,14.7L17.4,17.84L14.6,17.84C14.6,14.7 10.7,14.7 10.7,17.84L7.3,17.84C7.3,14.7 3.7,14.7 3.7,17.84Z" fill="#afb1b3"/><path d="M4.5,6.7L6.9,10.1L10.7,8" fill="none" stroke="#2d2f30" stroke-width="0.8"/><circle cx="15.9" cy="7.4" r="0.7" fill="#2d2f30"/></svg></div>
<svg class="ab" style="left:1292px;top:289px" width="24" height="23" viewBox="0 0 24 23"><ellipse cx="9.8" cy="9.6" rx="8.7" ry="8.8" fill="#afb1b3"/><path d="M11.3,12.5L22,2.7V23H13.5L12.45,17.85L8.8,14Z" fill="#3c3f41"/><path d="M3.2,3.4L11.6,12.8" fill="none" stroke="#3c3f41" stroke-width="1.4"/><path d="M8.8,14L12.45,17.85L19.75,10.96" fill="none" stroke="#3c3f41" stroke-width="4.8"/><path d="M8.8,14L12.45,17.85L19.75,10.96" fill="none" stroke="#afb1b3" stroke-width="2.4"/></svg>
<div class="ab" style="left:0;top:832px;width:1318px;height:1px;background:#2f3133"></div>
<div class="ab" style="left:0;top:833px;width:1318px;height:5px;background:#3c3f41"></div>
</body></html>
